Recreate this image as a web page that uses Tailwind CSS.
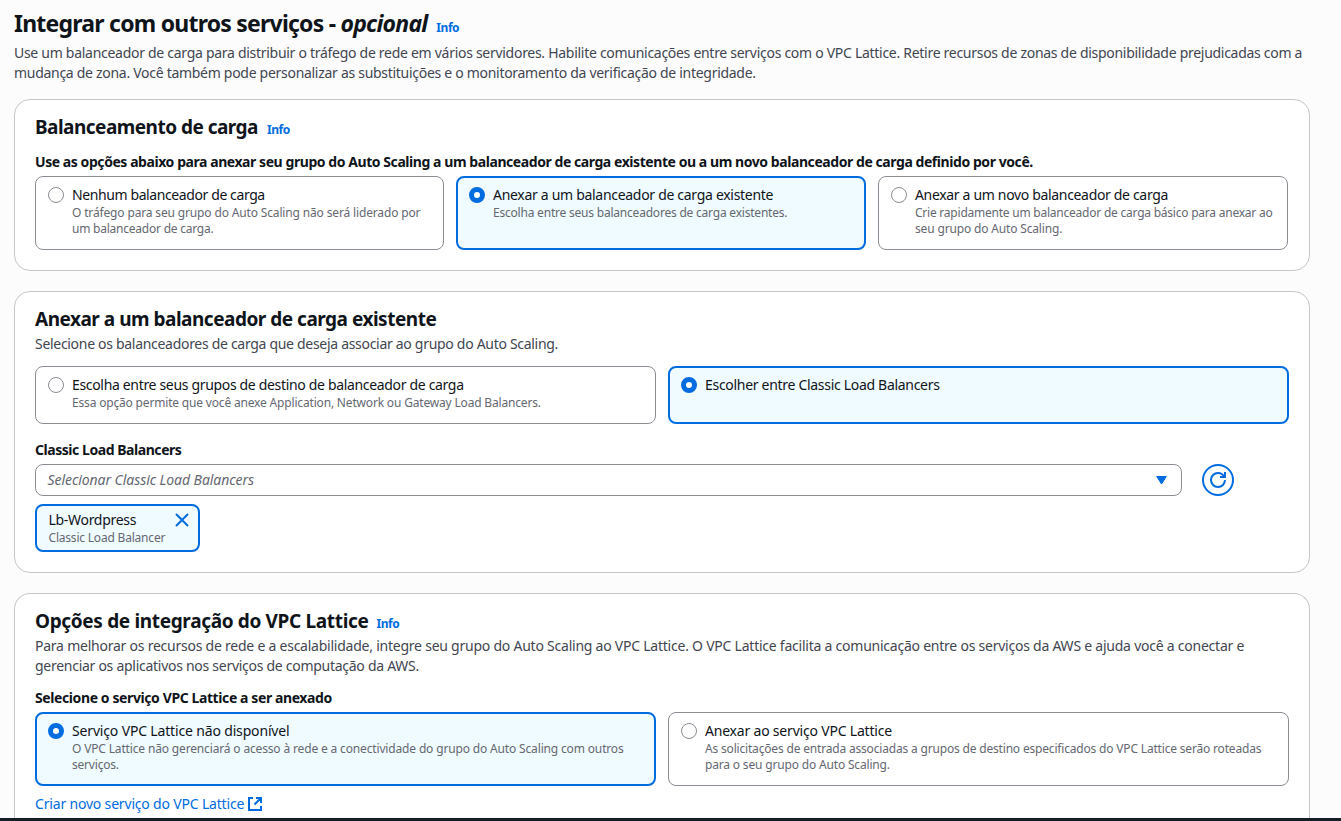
<!DOCTYPE html>
<html lang="pt-BR">
<head>
<meta charset="utf-8">
<title>Integrar com outros serviços</title>
<script src="https://cdn.jsdelivr.net/npm/@tailwindcss/browser@4"></script>
</head>
<body class="flex h-[821px] flex-col overflow-hidden bg-[#fcfcfd] font-['Noto_Sans',sans-serif] text-[14px] leading-5 text-[#0f141a]">
<main class="flex h-[818px] w-[1310px] flex-col overflow-hidden whitespace-nowrap pl-[14px] pt-2">
  <header class="h-[91px] shrink-0">
    <div class="flex h-[35px] items-baseline gap-[9px]">
      <h1 class="text-[23px] font-bold leading-[30px] tracking-[-0.77px]"><span>Integrar com outros serviços - </span><em>opcional</em></h1>
      <a class="text-[12px] font-bold tracking-[-0.45px] text-[#006ce0]">Info</a>
    </div>
    <p class="text-[#424650]"><span class="tracking-[-0.285px]">Use um balanceador de carga para distribuir o tráfego de rede em vários servidores. Habilite comunicações entre serviços com o VPC Lattice. Retire recursos de zonas de disponibilidade prejudicadas com a</span><br><span class="tracking-[-0.29px]">mudança de zona. Você também pode personalizar as substituições e o monitoramento da verificação de integridade.</span></p>
  </header>

  <section class="h-[172px] shrink-0 rounded-2xl border border-[#c6c6cd] bg-white px-5 pt-[15px]">
    <div class="flex h-[37px] items-baseline gap-[9px]">
      <h2 class="text-[19px] font-bold leading-6 tracking-[-0.52px]">Balanceamento de carga</h2>
      <a class="text-[12px] font-bold tracking-[-0.45px] text-[#006ce0]">Info</a>
    </div>
    <h3 class="h-6 font-bold tracking-[-0.435px]">Use as opções abaixo para anexar seu grupo do Auto Scaling a um balanceador de carga existente ou a um novo balanceador de carga definido por você.</h3>
    <div class="grid grid-cols-[409px_410px_410px] gap-3">
      <div class="flex h-[74px] gap-2 rounded-lg border border-[#8c8c94] px-3 pt-2">
        <span class="mt-0.5 size-4 shrink-0 rounded-full border border-[#8c8c94]"></span>
        <div><div class="tracking-[-0.4px]">Nenhum balanceador de carga</div>
        <div class="text-[12px] leading-4 text-[#656871]"><span class="tracking-[-0.15px]">O tráfego para seu grupo do Auto Scaling não será liderado por</span><br><span class="tracking-[-0.23px]">um balanceador de carga.</span></div></div>
      </div>
      <div class="flex h-[74px] gap-2 rounded-lg border-2 border-[#006ce0] bg-[#f0fbff] px-[11px] pt-[7px]">
        <span class="mt-0.5 size-4 shrink-0 rounded-full border-5 border-[#006ce0] bg-white"></span>
        <div><div class="tracking-[-0.3px]">Anexar a um balanceador de carga existente</div>
        <div class="text-[12px] leading-4 text-[#656871]"><span class="tracking-[-0.21px]">Escolha entre seus balanceadores de carga existentes.</span></div></div>
      </div>
      <div class="flex h-[74px] gap-2 rounded-lg border border-[#8c8c94] px-3 pt-2">
        <span class="mt-0.5 size-4 shrink-0 rounded-full border border-[#8c8c94]"></span>
        <div><div class="tracking-[-0.33px]">Anexar a um novo balanceador de carga</div>
        <div class="text-[12px] leading-4 text-[#656871]"><span class="tracking-[-0.23px]">Crie rapidamente um balanceador de carga básico para anexar ao</span><br><span class="tracking-[-0.16px]">seu grupo do Auto Scaling.</span></div></div>
      </div>
    </div>
  </section>

  <section class="mt-5 h-[282px] shrink-0 rounded-2xl border border-[#c6c6cd] bg-white px-5 pt-[15px]">
    <h2 class="h-[27px] text-[19px] font-bold leading-6 tracking-[-0.49px]">Anexar a um balanceador de carga existente</h2>
    <p class="h-8 tracking-[-0.3px] text-[#424650]">Selecione os balanceadores de carga que deseja associar ao grupo do Auto Scaling.</p>
    <div class="grid grid-cols-2 gap-3">
      <div class="flex h-[58px] gap-2 rounded-lg border border-[#8c8c94] px-3 pt-2">
        <span class="mt-0.5 size-4 shrink-0 rounded-full border border-[#8c8c94]"></span>
        <div><div class="tracking-[-0.33px]">Escolha entre seus grupos de destino de balanceador de carga</div>
        <div class="text-[12px] leading-4 text-[#656871]"><span class="tracking-[-0.175px]">Essa opção permite que você anexe Application, Network ou Gateway Load Balancers.</span></div></div>
      </div>
      <div class="flex h-[58px] gap-2 rounded-lg border-2 border-[#006ce0] bg-[#f0fbff] px-[11px] pt-[7px]">
        <span class="mt-0.5 size-4 shrink-0 rounded-full border-5 border-[#006ce0] bg-white"></span>
        <div class="tracking-[-0.3px]">Escolher entre Classic Load Balancers</div>
      </div>
    </div>
    <h3 class="mt-4 h-6 font-bold tracking-[-0.45px]">Classic Load Balancers</h3>
    <div class="flex gap-5">
      <div class="flex h-8 w-[1147px] items-center justify-between rounded-lg border border-[#8c8c94] pl-[11.5px] pr-[14.5px]">
        <em class="tracking-[-0.06px] text-[#656871]">Selecionar Classic Load Balancers</em>
        <svg class="h-[9px] w-[11px]" viewBox="0 0 11 9"><path d="M.7.5h9.6L5.5 8z" fill="#006ce0" stroke="#006ce0" stroke-linejoin="round"/></svg>
      </div>
      <div class="flex size-8 items-center justify-center rounded-full border-2 border-[#006ce0]">
        <svg class="size-4" viewBox="0 0 16 16" fill="none" stroke="#006ce0" stroke-width="2"><path d="M15 8c0 3.87-3.13 7-7 7s-7-3.13-7-7 3.13-7 7-7c2.79 0 5.2 1.63 6.33 4"/><path d="M10 5h5V0"/></svg>
      </div>
    </div>
    <div class="mt-2 flex h-12 w-[165px] justify-between rounded-lg border-2 border-[#006ce0] bg-[#f0fbff] pl-[11.5px] pr-2 pt-1">
      <div><div class="tracking-[-0.3px]">Lb-Wordpress</div><div class="text-[12px] leading-4 tracking-[-0.2px] text-[#656871]">Classic Load Balancer</div></div>
      <svg class="mt-0.5 size-4 -ml-4" viewBox="0 0 16 16" fill="none" stroke="#006ce0" stroke-width="2"><path d="m2 2 12 12M14 2 2 14"/></svg>
    </div>
  </section>

  <section class="mt-5 h-[260px] shrink-0 rounded-t-2xl border border-b-0 border-[#c6c6cd] bg-white px-5 pt-[15px]">
    <div class="flex h-[27px] items-baseline gap-2">
      <h2 class="text-[19px] font-bold leading-6 tracking-[-0.34px]">Opções de integração do VPC Lattice</h2>
      <a class="text-[12px] font-bold tracking-[-0.45px] text-[#006ce0]">Info</a>
    </div>
    <p class="h-[52px] text-[#424650]"><span class="tracking-[-0.235px]">Para melhorar os recursos de rede e a escalabilidade, integre seu grupo do Auto Scaling ao VPC Lattice. O VPC Lattice facilita a comunicação entre os serviços da AWS e ajuda você a conectar e</span><br><span class="tracking-[-0.275px]">gerenciar os aplicativos nos serviços de computação da AWS.</span></p>
    <h3 class="h-6 font-bold tracking-[-0.4px]">Selecione o serviço VPC Lattice a ser anexado</h3>
    <div class="grid grid-cols-2 gap-3">
      <div class="flex h-[74px] gap-2 rounded-lg border-2 border-[#006ce0] bg-[#f0fbff] px-[11px] pt-[7px]">
        <span class="mt-0.5 size-4 shrink-0 rounded-full border-5 border-[#006ce0] bg-white"></span>
        <div><div class="tracking-[-0.16px]">Serviço VPC Lattice não disponível</div>
        <div class="text-[12px] leading-4 text-[#656871]"><span class="tracking-[-0.155px]">O VPC Lattice não gerenciará o acesso à rede e a conectividade do grupo do Auto Scaling com outros</span><br><span class="tracking-[-0.2px]">serviços.</span></div></div>
      </div>
      <div class="flex h-[74px] gap-2 rounded-lg border border-[#8c8c94] px-3 pt-2">
        <span class="mt-0.5 size-4 shrink-0 rounded-full border border-[#8c8c94]"></span>
        <div><div class="tracking-[-0.2px]">Anexar ao serviço VPC Lattice</div>
        <div class="text-[12px] leading-4 text-[#656871]"><span class="tracking-[-0.18px]">As solicitações de entrada associadas a grupos de destino especificados do VPC Lattice serão roteadas</span><br><span class="tracking-[-0.17px]">para o seu grupo do Auto Scaling.</span></div></div>
      </div>
    </div>
    <a class="mt-2 flex items-center gap-[3px] text-[#006ce0]"><span class="tracking-[-0.18px]">Criar novo serviço do VPC Lattice</span>
      <svg class="size-4" viewBox="0 0 16 16" fill="none" stroke="#006ce0" stroke-width="2"><path d="M6 2H2v12h12v-4M9 2h5v5M14 2 7.5 8.5"/></svg>
    </a>
  </section>
</main>
<div class="h-[3px] shrink-0 bg-[#161d26]"></div>
</body>
</html>
